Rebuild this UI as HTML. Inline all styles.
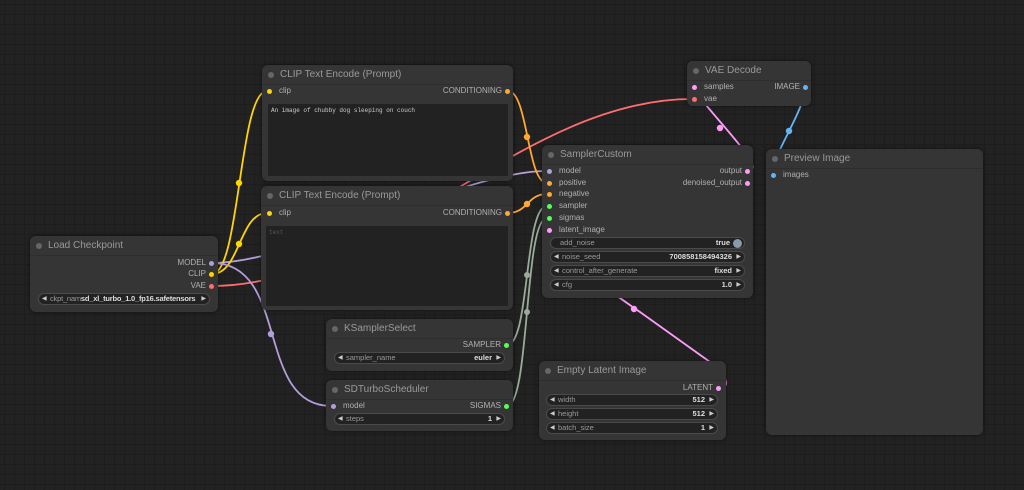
<!DOCTYPE html>
<html><head><meta charset="utf-8"><style>
*{margin:0;padding:0;box-sizing:border-box}
body{width:1024px;height:490px;overflow:hidden;background:#222;font-family:"Liberation Sans",Arial,sans-serif;position:relative;
background-image:linear-gradient(#1d1d1d 1px,transparent 1px),linear-gradient(90deg,#1d1d1d 1px,transparent 1px);background-size:10px 10px;background-position:4px 4px}
.n{position:absolute;background:#353535;border-radius:6px;box-shadow:0 0 4px rgba(0,0,0,.5)}
.t{height:20px;background:#353535;border-bottom:1px solid #2e2e2e;border-radius:6px 6px 0 0;color:#999;font-size:10px;line-height:19px;padding-left:18px;position:relative}
.t:before{content:"";position:absolute;left:6px;top:7px;width:6px;height:6px;border-radius:50%;background:#666}
.s{position:absolute;font-size:8px;color:#b0b0b0;line-height:10px}
.s i{position:absolute;width:5px;height:5px;border-radius:50%;top:2.5px}
.in{padding-left:6px}.in i{left:-6px}
.out{text-align:right}.out i{right:-8px}
.w{position:absolute;height:12px;background:#222;border:1px solid #4a4a4a;border-radius:6px;font-size:7.5px;line-height:10px;color:#999}
.w .l{position:absolute;left:11px}.w .v{position:absolute;right:12px;color:#ddd;font-weight:bold}
.w:before{content:"◀";position:absolute;left:3px;font-size:6px;color:#ccc}
.w:after{content:"▶";position:absolute;right:3px;font-size:6px;color:#ccc}
.w.nb:before,.w.nb:after{content:""}
.ta{position:absolute;background:#222;font-family:"Liberation Mono",monospace;font-size:6px;color:#ccc;padding:3px}
</style></head><body>
<svg width="1024" height="490" style="position:absolute;left:0;top:0" fill="none" stroke-width="1.8">
<path d="M212,263 C300,263 460,171 547,171" stroke="#b39ddb"/>
<path d="M212,286 C380,286 520,99 692,99" stroke="#ff6e6e"/>
<path d="M212,274 C240,274 239,91 267,91" stroke="#ffd500"/>
<path d="M212,274 C240,274 239,213 267,213" stroke="#ffd500"/>
<path d="M212,263 C290,263 255,406 331,406" stroke="#b39ddb"/>
<path d="M508,91 C528,91 527,183 547,183" stroke="#ffa931"/>
<path d="M508,213 C528,213 527,194 547,194" stroke="#ffa931"/>
<path d="M507,345 C530,345 524,206 547,206" stroke="#9aab9a"/>
<path d="M507,406 C530,406 524,218 547,218" stroke="#9aab9a"/>
<path d="M721,388 C728,388 730,378 710,362 L640,312 C600,285 530,230 547,230" stroke="#ff9cf9"/>
<path d="M747,171 C770,171 715,120 692,87" stroke="#ff9cf9"/>
<path d="M805,87 C805,110 775,150 771,175" stroke="#64b5f6"/>
<g stroke="none">
<circle cx="239" cy="183" r="3.2" fill="#ffd500"/><circle cx="239" cy="244" r="3.2" fill="#ffd500"/>
<circle cx="271" cy="334" r="3.2" fill="#b39ddb"/><circle cx="527" cy="137" r="3.2" fill="#ffa931"/>
<circle cx="527" cy="204" r="3.2" fill="#ffa931"/><circle cx="527" cy="275" r="3" fill="#9aab9a"/>
<circle cx="527" cy="312" r="3" fill="#9aab9a"/><circle cx="634" cy="309" r="3.2" fill="#ff9cf9"/>
<circle cx="720" cy="128" r="3.2" fill="#ff9cf9"/><circle cx="789" cy="131" r="3.2" fill="#64b5f6"/>
</g></svg>

<div class="n" style="left:262px;top:65px;width:251px;height:116px"><div class="t">CLIP Text Encode (Prompt)</div>
<div class="s in" style="left:11px;top:21px">clip<i style="background:#ffd500"></i></div>
<div class="s out" style="right:11px;top:21px">CONDITIONING<i style="background:#ffa931"></i></div>
<div class="ta" style="left:6px;top:39px;width:240px;height:72px">An image of chubby dog sleeping on couch</div></div>

<div class="n" style="left:261px;top:186px;width:252px;height:124px"><div class="t">CLIP Text Encode (Prompt)</div>
<div class="s in" style="left:12px;top:22px">clip<i style="background:#ffd500"></i></div>
<div class="s out" style="right:11px;top:22px">CONDITIONING<i style="background:#ffa931"></i></div>
<div class="ta" style="left:5px;top:40px;width:242px;height:80px;color:#555">text</div></div>

<div class="n" style="left:30px;top:236px;width:188px;height:76px"><div class="t">Load Checkpoint</div>
<div class="s out" style="right:12px;top:22px">MODEL<i style="background:#b39ddb"></i></div>
<div class="s out" style="right:12px;top:33px">CLIP<i style="background:#ffd500"></i></div>
<div class="s out" style="right:12px;top:45px">VAE<i style="background:#ff6e6e"></i></div>
<div class="w" style="left:8px;top:57px;width:172px"><span class="l" style="letter-spacing:-0.2px">ckpt_nam<b style="color:#ddd">sd_xl_turbo_1.0_fp16.safetensors</b></span></div></div>

<div class="n" style="left:687px;top:61px;width:124px;height:45px"><div class="t">VAE Decode</div>
<div class="s in" style="left:11px;top:21px">samples<i style="background:#ff9cf9"></i></div>
<div class="s in" style="left:11px;top:33px">vae<i style="background:#ff6e6e"></i></div>
<div class="s out" style="right:11px;top:21px">IMAGE<i style="background:#64b5f6"></i></div></div>

<div class="n" style="left:542px;top:145px;width:211px;height:153px"><div class="t">SamplerCustom</div>
<div class="s in" style="left:11px;top:21px">model<i style="background:#b39ddb"></i></div>
<div class="s in" style="left:11px;top:33px">positive<i style="background:#ffa931"></i></div>
<div class="s in" style="left:11px;top:44px">negative<i style="background:#ffa931"></i></div>
<div class="s in" style="left:11px;top:56px">sampler<i style="background:#5f5"></i></div>
<div class="s in" style="left:11px;top:68px">sigmas<i style="background:#5f5"></i></div>
<div class="s in" style="left:11px;top:80px">latent_image<i style="background:#ff9cf9"></i></div>
<div class="s out" style="right:11px;top:21px">output<i style="background:#ff9cf9"></i></div>
<div class="s out" style="right:11px;top:33px">denoised_output<i style="background:#ff9cf9"></i></div>
<div class="w nb" style="left:8px;top:92px;width:195px"><span class="l" style="left:9px">add_noise</span><span class="v" style="right:14px">true</span><span style="position:absolute;right:2px;top:0.5px;width:9px;height:9px;border-radius:50%;background:#89a"></span></div>
<div class="w" style="left:8px;top:106px;width:195px"><span class="l">noise_seed</span><span class="v">700858158494326</span></div>
<div class="w" style="left:8px;top:120px;width:195px"><span class="l">control_after_generate</span><span class="v">fixed</span></div>
<div class="w" style="left:8px;top:134px;width:195px"><span class="l">cfg</span><span class="v">1.0</span></div></div>

<div class="n" style="left:766px;top:149px;width:217px;height:286px"><div class="t">Preview Image</div>
<div class="s in" style="left:11px;top:21px">images<i style="background:#64b5f6"></i></div></div>

<div class="n" style="left:326px;top:319px;width:187px;height:52px"><div class="t">KSamplerSelect</div>
<div class="s out" style="right:12px;top:21px">SAMPLER<i style="background:#5f5"></i></div>
<div class="w" style="left:8px;top:33px;width:171px"><span class="l">sampler_name</span><span class="v">euler</span></div></div>

<div class="n" style="left:326px;top:380px;width:187px;height:51px"><div class="t">SDTurboScheduler</div>
<div class="s in" style="left:11px;top:21px">model<i style="background:#b39ddb"></i></div>
<div class="s out" style="right:12px;top:21px">SIGMAS<i style="background:#5f5"></i></div>
<div class="w" style="left:8px;top:33px;width:171px"><span class="l">steps</span><span class="v">1</span></div></div>

<div class="n" style="left:539px;top:361px;width:187px;height:79px"><div class="t">Empty Latent Image</div>
<div class="s out" style="right:13px;top:22px">LATENT<i style="background:#ff9cf9"></i></div>
<div class="w" style="left:7px;top:33px;width:172px"><span class="l">width</span><span class="v">512</span></div>
<div class="w" style="left:7px;top:47px;width:172px"><span class="l">height</span><span class="v">512</span></div>
<div class="w" style="left:7px;top:61px;width:172px"><span class="l">batch_size</span><span class="v">1</span></div></div>
</body></html>
